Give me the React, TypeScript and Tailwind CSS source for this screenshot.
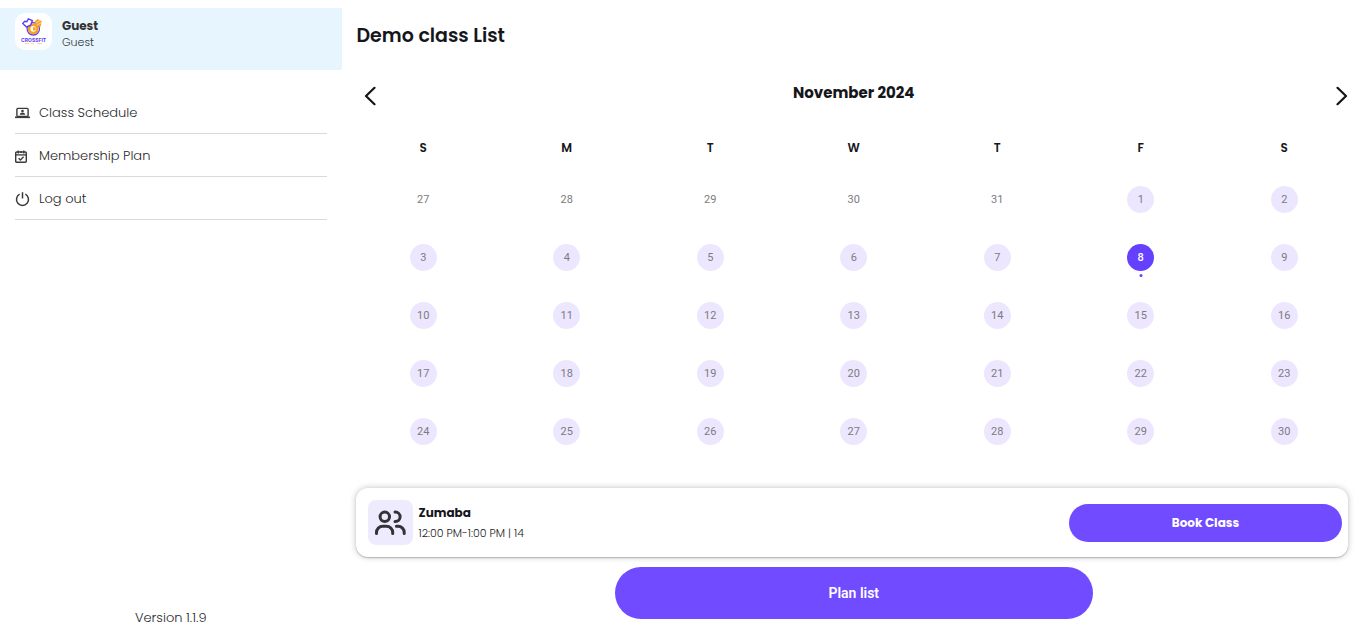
import type { ReactNode } from "react";

const weekdays = ["S", "M", "T", "W", "T", "F", "S"];
const leading = [27, 28, 29, 30, 31];
const cells = [
  ...leading.map((day) => ({ day, inMonth: false })),
  ...Array.from({ length: 30 }, (_, i) => ({ day: i + 1, inMonth: true })),
];
const weeks = [0, 1, 2, 3, 4].map((w) => cells.slice(w * 7, w * 7 + 7));
const selectedDay = 8;

function Logo() {
  return (
    <svg viewBox="0 0 37 37" className="size-[37px] shrink-0 rounded-[10px] bg-white" role="img" aria-label="Crossfit">
      <circle cx="18.3" cy="15.8" r="6.2" fill="none" stroke="#5b3df5" strokeWidth="1.3" />
      <circle cx="18.3" cy="15.8" r="4.2" fill="#fff" stroke="#f9a11b" strokeWidth="2.6" />
      <rect x="18" y="14.2" width="2.6" height="3.2" fill="#f9a11b" />
      <path d="M19.5 8.5l3.2-2.4 4 2.2-1.2 5.6-3-1.4z" fill="#f9a11b" />
      <path d="M20.6 10.4l4.4-3M22 12.2l4.6-2.8" stroke="#fff" strokeWidth=".6" />
      <path d="M7.8 10.4l2-2.2 2 .4 1.6-2.8 4 1.8-1.8 4.6-4.2 1.8z" fill="#fff" stroke="#5b3df5" strokeWidth="1.4" />
      <text x="18.6" y="28.8" textAnchor="middle" fontSize="5" fontWeight="700" fontFamily="Inter, sans-serif" fill="#5b3df5">
        CROSSFIT
      </text>
      <path d="M10 30.6h4m2 0h3m3 0h5" stroke="#f9a11b" strokeWidth=".6" opacity=".8" />
    </svg>
  );
}

function ScheduleIcon() {
  return (
    <svg viewBox="0 0 15 12" className="h-3 w-[15px]" fill="none" aria-hidden="true">
      <rect x="1.9" y="1.4" width="11.2" height="8" rx="1" stroke="#3a3a3a" strokeWidth="1.4" />
      <path d="M0 10.3h15" stroke="#3a3a3a" strokeWidth="1.6" />
      <circle cx="7.5" cy="4.1" r="1.3" fill="#3a3a3a" />
      <path d="M4.8 7.8c0-1.4 1.2-2 2.7-2s2.7.6 2.7 2z" fill="#3a3a3a" />
    </svg>
  );
}

function PlanIcon() {
  return (
    <svg viewBox="0 0 12 13" className="h-[13px] w-3" fill="none" stroke="#3a3a3a" aria-hidden="true">
      <rect x=".7" y="2" width="10.6" height="10.2" rx="1" strokeWidth="1.4" />
      <path d="M.7 4.9h10.6" strokeWidth="1.3" />
      <path d="M3.2.5v3M8.8.5v3M6 1v2" strokeWidth="1.3" />
      <path d="M3.6 8.2l1.8 1.8 3.2-3.2" strokeWidth="1.3" />
    </svg>
  );
}

function PowerIcon() {
  return (
    <svg viewBox="0 0 15 15" className="size-[15px]" fill="none" stroke="#3a3a3a" strokeWidth="1.5" aria-hidden="true">
      <path d="M7.5.2v6.4M4.6 2.2a6 6 0 1 0 5.8 0" />
    </svg>
  );
}

function PeopleIcon() {
  return (
    <svg viewBox="0 0 32 26" className="h-[26px] w-8" fill="none" stroke="#333238" strokeWidth="3" strokeLinecap="round" aria-hidden="true">
      <circle cx="10.8" cy="6.8" r="4.7" />
      <path d="M2.5 23.6v-1a6.3 6.3 0 0 1 6.3-6.4h3.6a6.3 6.3 0 0 1 6.3 6.4v1" />
      <path d="M21 2.1h.4a4.7 4.7 0 0 1 0 9.4H21M22.4 16.2h1.6a6.2 6.2 0 0 1 6.2 6.4v1" />
    </svg>
  );
}

function MenuItem({ icon, children }: { icon: ReactNode; children: ReactNode }) {
  return (
    <li className="border-b border-[#d9dae0]">
      <a href="#" className="flex h-[42px] items-center pt-0.5 text-[13px] font-light text-[#2a2a2a]">
        <span className="flex w-6 shrink-0 items-center">{icon}</span>
        {children}
      </a>
    </li>
  );
}

function Chevron({ d }: { d: string }) {
  return (
    <svg viewBox="0 0 12 20" className="h-5 w-3" fill="none" stroke="#14151a" strokeWidth="2.2" strokeLinecap="round" strokeLinejoin="round" aria-hidden="true">
      <path d={d} />
    </svg>
  );
}

export default function App() {
  return (
    <div className="flex min-h-screen bg-white font-[Poppins,Inter,sans-serif] text-[#15161c]">
      <aside className="flex w-1/4 shrink-0 flex-col pt-2">
        <div className="flex h-[62px] items-start gap-[10px] bg-[#e7f5ff] px-[15px] pt-[5px]">
          <Logo />
          <div className="pt-[5px]">
            <p className="text-xs leading-4 font-bold text-[#333]">Guest</p>
            <p className="text-[11px] leading-4 font-light text-[#333]">Guest</p>
          </div>
        </div>
        <nav className="px-[15px] pt-[21px]">
          <ul>
            <MenuItem icon={<ScheduleIcon />}>Class Schedule</MenuItem>
            <MenuItem icon={<PlanIcon />}>Membership Plan</MenuItem>
            <MenuItem icon={<PowerIcon />}>Log out</MenuItem>
          </ul>
        </nav>
        <p className="mt-auto pb-[11px] text-center text-[13px] leading-5 font-light text-[#2a2a2a]">Version 1.1.9</p>
      </aside>

      <main className="min-w-0 flex-1 pt-[21px] pb-5">
        <h1 className="px-[15px] text-[19px] leading-[30px] font-semibold">Demo class List</h1>

        <section className="px-[10px] pt-[29px]" aria-label="Calendar">
          <div className="flex h-[30px] items-center justify-between pr-2 pl-3">
            <button type="button" aria-label="Previous month" className="pt-0.5">
              <Chevron d="M10.5 1.8 2 10l8.5 8.2" />
            </button>
            <h2 className="pr-1 pb-1 text-[15px] leading-6 font-bold">November 2024</h2>
            <button type="button" aria-label="Next month" className="pt-0.5">
              <Chevron d="M1.5 1.8 10 10l-8.5 8.2" />
            </button>
          </div>
          <table className="mt-6 w-full table-fixed border-collapse">
            <thead>
              <tr>
                {weekdays.map((name, i) => (
                  <th key={i} scope="col" className="h-[27px] p-0 text-xs font-semibold">
                    {name}
                  </th>
                ))}
              </tr>
            </thead>
            <tbody className="font-[Roboto,sans-serif] text-[11px] text-[#7d7a80]">
              {weeks.map((week, w) => (
                <tr key={w}>
                  {week.map(({ day, inMonth }) => {
                    const selected = inMonth && day === selectedDay;
                    return (
                      <td key={day} className="h-[58px] p-0 pt-[25px] align-top">
                        <div className="relative mx-auto size-[27px]">
                          <button
                            type="button"
                            className={
                              selected
                                ? "block size-full rounded-full bg-[#6640ff] leading-[27px] font-medium text-white"
                                : inMonth
                                  ? "block size-full rounded-full bg-[#ece7ff] leading-[27px]"
                                  : "block size-full rounded-full leading-[27px]"
                            }
                          >
                            {day}
                          </button>
                          {selected && (
                            <span className="absolute top-[30px] left-1/2 size-[3px] -translate-x-1/2 rounded-full bg-[#6640ff]" />
                          )}
                        </div>
                      </td>
                    );
                  })}
                </tr>
              ))}
            </tbody>
          </table>
        </section>

        <div className="pr-[18px] pl-[14px]">
          <article className="mt-[37px] flex h-[69px] items-center rounded-xl bg-white pr-[6px] pl-3 shadow-[0_1px_1px_rgba(0,0,0,0.2),0_0_6px_rgba(0,0,0,0.25)]">
            <div className="flex size-[45px] shrink-0 items-center justify-center rounded-lg bg-[#efebff]">
              <PeopleIcon />
            </div>
            <div className="min-w-0 flex-1 pl-[6px]">
              <h3 className="text-xs leading-5 font-bold">Zumaba</h3>
              <p className="text-[11px] leading-5 font-light text-[#222]">12:00 PM-1:00 PM | 14</p>
            </div>
            <button type="button" className="h-[38px] w-[273px] rounded-full bg-[#704bff] text-xs font-bold text-white">
              Book Class
            </button>
          </article>
        </div>
        <button
          type="button"
          className="mx-auto mt-[10px] block h-[52px] w-[478px] rounded-full bg-[#704bff] font-[Roboto,sans-serif] text-sm font-semibold text-white"
        >
          Plan list
        </button>
      </main>
    </div>
  );
}
